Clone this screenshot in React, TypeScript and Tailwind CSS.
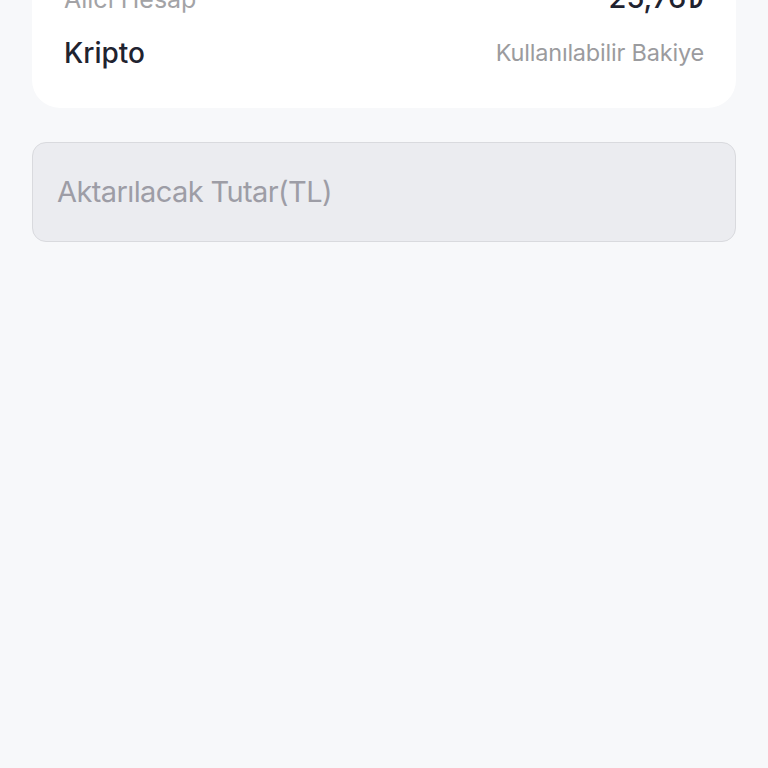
export default function App() {
  return (
    <div
      className="min-h-screen w-full overflow-hidden bg-[#f7f8fa] px-8"
      style={{ fontFamily: "Inter, 'Noto Sans', sans-serif" }}
    >
      {/* Account card, scrolled partly out of view */}
      <div className="-mt-[48px] rounded-[28px] bg-white px-8 pb-[38px] pt-[29px]">
        <div className="flex items-end justify-between">
          <span className="text-[25px] leading-[32px] text-[#a3a3a6]">Alıcı Hesap</span>
          <span className="text-[29px] font-medium leading-[34px] text-[#1f2330]">25,76₺</span>
        </div>
        <div className="mt-[21px] flex items-center justify-between">
          <span className="text-[28px] font-medium leading-[34px] text-[#1f2330]">Kripto</span>
          <span className="text-[23.5px] leading-[30px] tracking-[-0.2px] text-[#9b9b9e]">
            Kullanılabilir Bakiye
          </span>
        </div>
      </div>

      {/* Amount input */}
      <div className="mt-[34px] flex h-[100px] items-center rounded-[14px] border border-[#d9dade] bg-[#ebecf0] px-6">
        <input
          className="w-full bg-transparent text-[29px] tracking-[-0.6px] text-[#1f2330] outline-none placeholder:text-[#9d9da6]"
          placeholder="Aktarılacak Tutar(TL)"
        />
      </div>
    </div>
  )
}
